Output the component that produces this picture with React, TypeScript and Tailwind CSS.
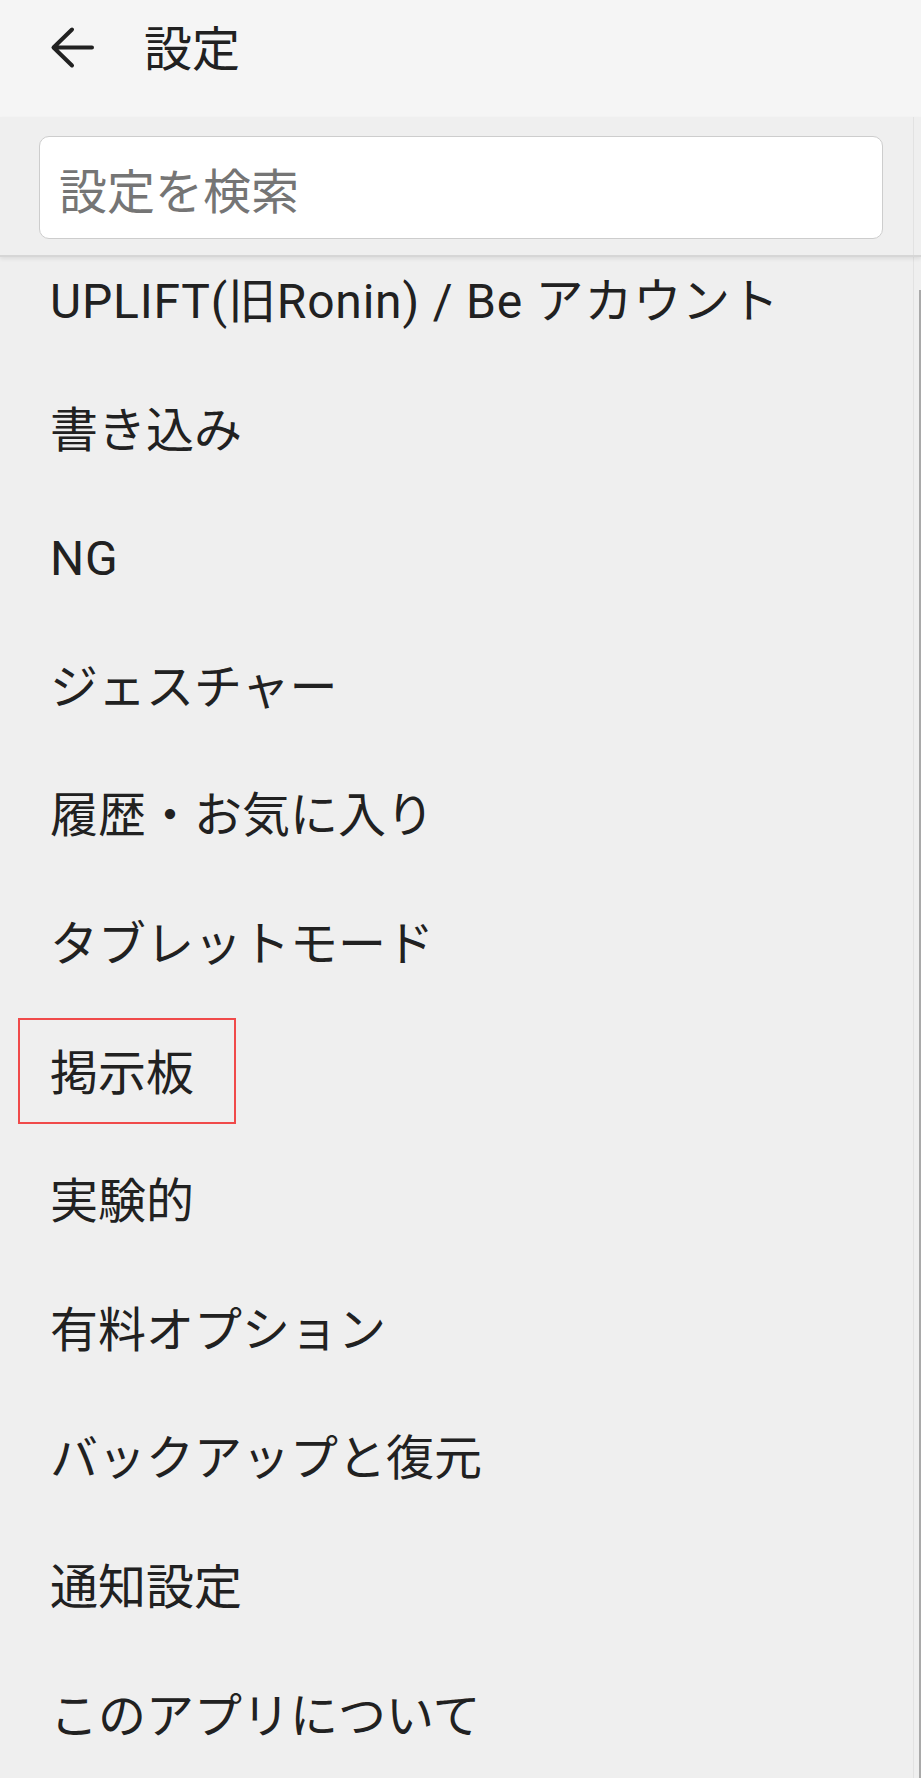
import React from "react";

const items = [
  "UPLIFT(旧Ronin) / Be アカウント",
  "書き込み",
  "NG",
  "ジェスチャー",
  "履歴・お気に入り",
  "タブレットモード",
  "掲示板",
  "実験的",
  "有料オプション",
  "バックアップと復元",
  "通知設定",
  "このアプリについて",
];

export default function App() {
  return (
    <div
      className="relative w-[921px] h-[1778px] overflow-hidden bg-[#efefef] text-[#212121]"
      style={{ fontFamily: 'Roboto, "Noto Sans CJK JP", sans-serif' }}
    >
      {/* Header */}
      <div className="flex h-[117px] items-start bg-[#f5f5f5] pt-[26px]">
        <div className="ml-[50px] flex h-[44px] w-[44px] items-center justify-center">
          <svg width="44" height="44" viewBox="0 0 44 44" fill="none">
            <path
              d="M42 19.5H4M22 1.5L3.5 19.5L22 37.5"
              stroke="#212121"
              strokeWidth="4"
              strokeLinecap="round"
              strokeLinejoin="round"
              transform="translate(0,2)"
            />
          </svg>
        </div>
        <div className="ml-[50px] text-[48px] leading-[48px] mt-[0px]">設定</div>
      </div>

      {/* Search */}
      <div className="relative z-10 h-[140px] border-b-2 border-[#d6d6d6] pl-[39px] pt-[19px] shadow-[0_2px_4px_rgba(0,0,0,0.08)]">
        <div className="flex h-[103px] w-[844px] items-center rounded-[10px] border-[1.5px] border-[#cdcdcd] bg-white pl-[19px] pt-[11px]">
          <span className="text-[48px] leading-[48px] text-[#757575]">設定を検索</span>
        </div>
      </div>

      {/* List */}
      <div className="flex flex-col">
        {items.map((label) => (
          <div key={label} className="h-[128.6px] pl-[50px] pt-[21px]">
            <span
              className={
                label === "UPLIFT(旧Ronin) / Be アカウント" || label === "NG"
                  ? "relative inline-block text-[48px] leading-[48px] tracking-[0.8px]"
                  : "relative inline-block text-[48px] leading-[48px]"
              }
            >
              {label}
              {label === "掲示板" && (
                <span className="absolute left-[-32px] top-[-32px] h-[106px] w-[218px] border-[2.5px] border-[#f04a4a]" />
              )}
            </span>
          </div>
        ))}
      </div>

      {/* Scroll edge */}
      <div className="absolute right-[7px] top-[117px] bottom-0 w-px bg-[#e2e2e2]" />
      <div className="absolute right-0 top-[290px] bottom-0 w-[2px] bg-[#a9a9a9]" />
    </div>
  );
}
